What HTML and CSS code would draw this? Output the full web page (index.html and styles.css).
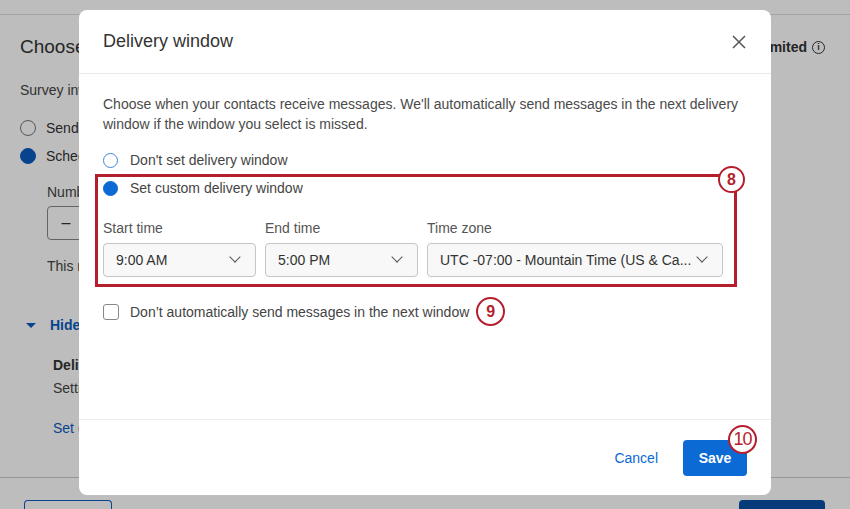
FILE: index.html
```html
<!DOCTYPE html>
<html lang="en">

<head>
  <meta charset="UTF-8">
  <meta name="viewport" content="width=device-width, initial-scale=1.0">
  <title>Delivery window</title>
  <link rel="stylesheet" href="styles.css">
</head>

<body>

  <!-- Page behind the dialog -->
  <div class="page">
    <div class="topbar"></div>
    <div class="page-content">
      <div class="page-head">
        <h2>Choose when to send</h2>
        <span class="limit">Unlimited <span class="info">i</span></span>
      </div>
      <p class="muted">Survey invitations will be sent to your contacts</p>
      <div class="bg-radio"><span class="bg-dot"></span>Send now</div>
      <div class="bg-radio"><span class="bg-dot on"></span>Schedule for later</div>
      <div class="indent">
        <div class="muted">Number of days</div>
        <div class="stepper">&ndash;</div>
        <p class="muted">This message will be sent later</p>
      </div>
      <div class="toggle"><span class="caret"></span>Hide advanced options</div>
      <div class="indent advanced">
        <div class="bold">Delivery window</div>
        <div class="muted">Setting a window</div>
        <div class="link">Set delivery window</div>
      </div>
    </div>
    <div class="page-foot">
      <span class="btn-outline"></span>
      <span class="btn-dark"></span>
    </div>
  </div>

  <div class="overlay"></div>

  <!-- Dialog -->
  <div class="modal">
    <div class="modal-header">
      <h3>Delivery window</h3>
      <svg class="close" width="16" height="16" viewBox="0 0 16 16">
        <path d="M2 2 L14 14 M14 2 L2 14" stroke="#555" stroke-width="1.5" fill="none" />
      </svg>
    </div>

    <div class="modal-body">
      <p class="intro">Choose when your contacts receive messages. We'll automatically send messages in the next delivery window if the window you select is missed.</p>

      <label class="option"><span class="radio"></span>Don't set delivery window</label>

      <div class="highlight">
        <span class="badge badge-8">8</span>
        <label class="option"><span class="radio checked"></span>Set custom delivery window</label>
        <div class="fields">
          <div class="field short">
            <div class="field-label">Start time</div>
            <div class="select"><span>9:00 AM</span><span class="chev"></span></div>
          </div>
          <div class="field short">
            <div class="field-label">End time</div>
            <div class="select"><span>5:00 PM</span><span class="chev"></span></div>
          </div>
          <div class="field wide">
            <div class="field-label">Time zone</div>
            <div class="select"><span>UTC -07:00 - Mountain Time (US &amp; Ca...</span><span class="chev"></span></div>
          </div>
        </div>
      </div>

      <label class="option check-row"><span class="checkbox"></span>Don’t automatically send messages in the next window<span class="badge badge-9">9</span></label>
    </div>

    <div class="modal-footer">
      <button class="cancel">Cancel</button>
      <div class="save-wrap">
        <button class="save">Save</button>
        <span class="badge badge-10">10</span>
      </div>
    </div>
  </div>

</body>

</html>
```

FILE: styles.css
```css
body {
  margin: 0;
  width: 850px;
  height: 509px;
  overflow: hidden;
  position: relative;
  font-family: "Liberation Sans", Arial, sans-serif;
  background-color: #fff;
  color: #333;
}

/* background page */
.page {
  height: 509px;
  display: flex;
  flex-direction: column;
}

.topbar {
  height: 14px;
  border-bottom: 1px solid #ddd;
}

.page-content {
  flex: 1;
  padding: 0 25px 0 20px;
}

.page-head {
  display: flex;
  justify-content: space-between;
  align-items: center;
  height: 64px;
}

.page-head h2 {
  margin: 0;
  font-size: 19px;
  font-weight: normal;
}

.limit {
  font-weight: bold;
  font-size: 14px;
  display: flex;
  align-items: center;
  gap: 5px;
}

.info {
  width: 11px;
  height: 11px;
  border: 1px solid #333;
  border-radius: 50%;
  font-size: 9px;
  text-align: center;
  line-height: 11px;
}

.muted {
  font-size: 14px;
  color: #444;
  margin: 0;
}

.page-content > .muted {
  margin: 3px 0 16px;
}

.bg-radio {
  display: flex;
  align-items: center;
  gap: 10px;
  font-size: 14px;
  height: 28px;
}

.bg-dot {
  width: 14px;
  height: 14px;
  border: 1px solid #777;
  border-radius: 50%;
}

.bg-dot.on {
  background-color: #0b5cc0;
  border-color: #0b5cc0;
}

.indent {
  padding-left: 27px;
}

.indent .muted:first-child {
  margin-top: 14px;
}

.indent.advanced {
  padding-left: 33px;
}

.stepper {
  width: 36px;
  height: 32px;
  margin: 6px 0 18px;
  border: 1px solid #888;
  border-radius: 4px;
  text-align: center;
  line-height: 32px;
}

.toggle {
  display: flex;
  align-items: center;
  gap: 14px;
  margin: 43px 0 24px 6px;
  color: #0b5cc0;
  font-weight: bold;
  font-size: 14px;
}

.caret {
  width: 0;
  height: 0;
  border-left: 5px solid transparent;
  border-right: 5px solid transparent;
  border-top: 5px solid #0b5cc0;
}

.bold {
  font-weight: bold;
  font-size: 14px;
  margin-bottom: 7px;
}

.link {
  color: #0b5cc0;
  font-size: 14px;
  margin-top: 24px;
}

.page-foot {
  height: 31px;
  border-top: 1px solid #ccc;
  display: flex;
  justify-content: space-between;
  align-items: flex-end;
  padding: 0 25px 0 24px;
}

.btn-outline {
  width: 86px;
  height: 8px;
  border: 1px solid #0b5cc0;
  border-bottom: none;
  border-radius: 4px 4px 0 0;
}

.btn-dark {
  width: 86px;
  height: 9px;
  background-color: #0a4fa3;
  border-radius: 4px 4px 0 0;
}

.overlay {
  position: absolute;
  inset: 0;
  background-color: rgba(0, 0, 0, 0.26);
}

/* dialog */
.modal {
  position: absolute;
  left: 79px;
  top: 10px;
  width: 692px;
  height: 485px;
  background-color: #fff;
  border-radius: 8px;
  display: flex;
  flex-direction: column;
}

.modal-header {
  height: 63px;
  padding: 0 24px;
  display: flex;
  justify-content: space-between;
  align-items: center;
  border-bottom: 1px solid #e9e9e9;
}

.modal-header h3 {
  margin: 0;
  font-size: 18px;
  font-weight: normal;
  color: #333;
}

.modal-body {
  flex: 1;
  padding: 20px 24px 0;
}

.intro {
  margin: 0 0 16px;
  font-size: 14px;
  line-height: 20px;
  color: #4a4a4a;
}

.option {
  display: flex;
  align-items: center;
  height: 20px;
  font-size: 14px;
  color: #444;
}

.radio {
  width: 13px;
  height: 13px;
  border: 1.5px solid #3d87dd;
  border-radius: 50%;
  margin-right: 12px;
}

.radio.checked {
  background-color: #0b6ad4;
  border-color: #0b6ad4;
}

.highlight {
  position: relative;
  width: 642px;
  box-sizing: border-box;
  margin: 4px 0 0 -8px;
  padding: 1px 11px 7px 5px;
  border: 3px solid #b51f2d;
}

.fields {
  display: flex;
  gap: 9px;
  margin-top: 20px;
}

.field.short {
  width: 153px;
}

.field.wide {
  flex: 1;
}

.field-label {
  font-size: 14px;
  line-height: 20px;
  color: #555;
  margin-bottom: 5px;
}

.select {
  height: 34px;
  box-sizing: border-box;
  border: 1px solid #c6c6c6;
  border-radius: 4px;
  background-color: #f8f8f8;
  display: flex;
  justify-content: space-between;
  align-items: center;
  padding: 0 16px 0 12px;
  font-size: 14px;
  color: #333;
}

.chev {
  width: 7px;
  height: 7px;
  border-right: 1.5px solid #555;
  border-bottom: 1.5px solid #555;
  transform: translateY(-3px) rotate(45deg);
}

.check-row {
  height: 29px;
  margin-top: 10px;
}

.checkbox {
  width: 14px;
  height: 14px;
  border: 1px solid #888;
  border-radius: 3px;
  margin-right: 11px;
}

.badge {
  width: 27px;
  height: 27px;
  box-sizing: border-box;
  border: 2.5px solid #b51f2d;
  border-radius: 50%;
  background-color: #fff;
  color: #b51f2d;
  font-size: 16px;
  font-weight: bold;
  display: flex;
  justify-content: center;
  align-items: center;
}

.badge-8 {
  position: absolute;
  top: -11px;
  right: -11px;
}

.badge-9 {
  margin-left: 7px;
  width: 29px;
  height: 29px;
}

.modal-footer {
  height: 75px;
  border-top: 1px solid #ececec;
  display: flex;
  justify-content: flex-end;
  align-items: center;
  padding: 0 24px;
}

.cancel {
  background: none;
  border: none;
  font-family: inherit;
  font-size: 14px;
  color: #0b6ad4;
  padding: 0 12px;
  margin-right: 13px;
}

.save-wrap {
  position: relative;
}

.save {
  width: 64px;
  height: 36px;
  background-color: #0b6ad4;
  color: #fff;
  border: none;
  border-radius: 4px;
  font-family: inherit;
  font-size: 14px;
  font-weight: bold;
}

.badge-10 {
  position: absolute;
  top: -15px;
  right: -10px;
  width: 29px;
  height: 29px;
  font-weight: normal;
  font-size: 18px;
  letter-spacing: -1px;
}
```
